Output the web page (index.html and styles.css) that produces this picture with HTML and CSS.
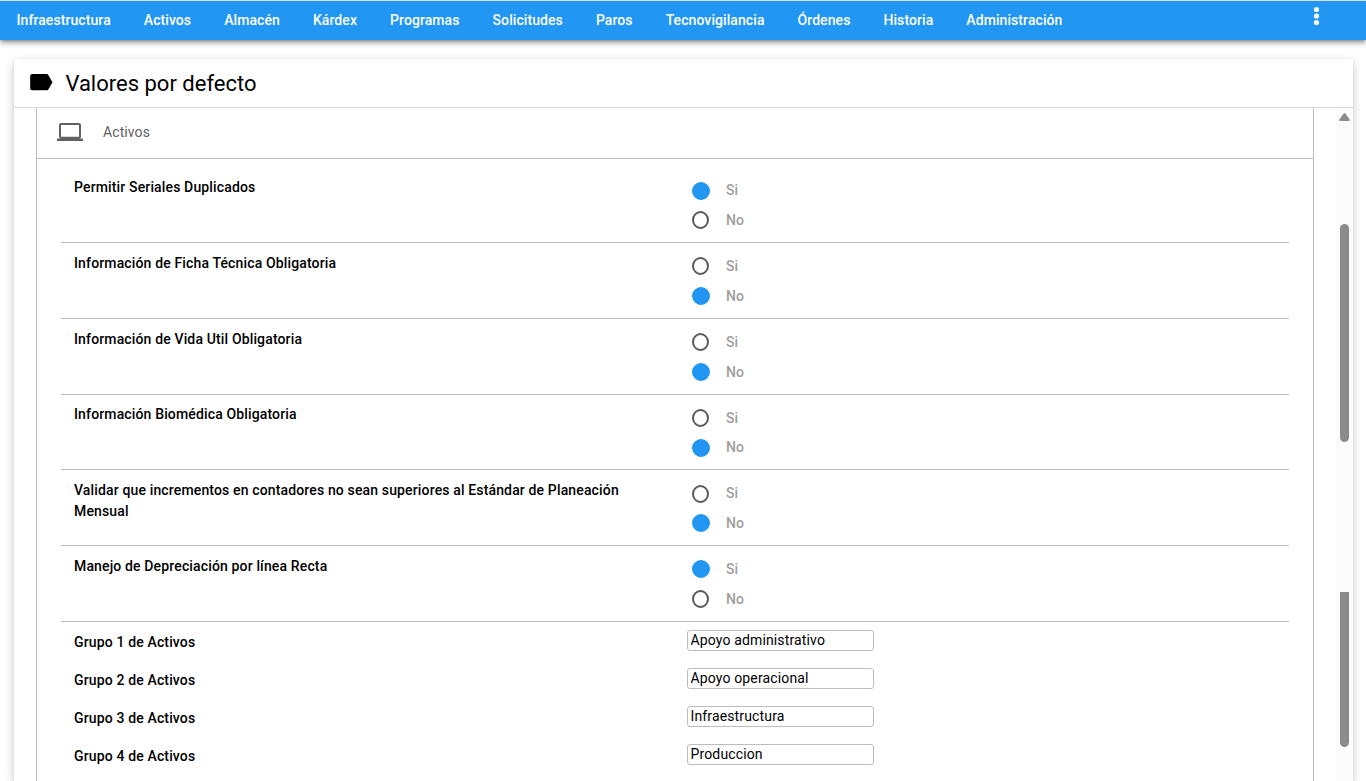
FILE: index.html
```html
<!DOCTYPE html>
<html lang="es">

<head>
    <meta charset="UTF-8">
    <meta name="viewport" content="width=device-width, initial-scale=1.0">
    <title>Valores por defecto</title>
    <link rel="stylesheet" href="styles.css">
</head>

<body>
    <!-- Main menu -->
    <nav class="navbar">
        <ul class="nav-links">
            <li><a href="#">Infraestructura</a></li>
            <li><a href="#">Activos</a></li>
            <li><a href="#">Almacén</a></li>
            <li><a href="#">Kárdex</a></li>
            <li><a href="#">Programas</a></li>
            <li><a href="#">Solicitudes</a></li>
            <li><a href="#">Paros</a></li>
            <li><a href="#">Tecnovigilancia</a></li>
            <li><a href="#">Órdenes</a></li>
            <li><a href="#">Historia</a></li>
            <li><a href="#">Administración</a></li>
        </ul>
        <svg class="more" width="8" height="20" viewBox="0 0 8 20" fill="#fff">
            <circle cx="3.5" cy="3.5" r="2.6" />
            <circle cx="3.5" cy="10" r="2.6" />
            <circle cx="3.5" cy="16.5" r="2.6" />
        </svg>
    </nav>

    <div class="card">
        <div class="card-header">
            <svg class="tag-icon" width="23" height="17" viewBox="0 0 23 17">
                <path d="M2.200 0h14.400c.7 0 1.300.3 1.700.9L22.500 8.200l-4.200 7.200c-.4.6-1 .9-1.700.9H2.200c-1.100 0-2-.9-2-2V2c0-1.100.9-2 2-2z" />
            </svg>
            <h1>Valores por defecto</h1>
        </div>

        <div class="card-body">
            <div class="panel">
                <div class="panel-header">
                    <svg class="laptop-icon" width="26" height="19" viewBox="0 0 26 19" fill="#616161">
                        <path fill-rule="evenodd" d="M4 0h18c1.100 0 2 .9 2 2v11.500c0 1.100-.9 2-2 2h4V18H0v-2.500h4c-1.100 0-2-.9-2-2V2C2 .9 2.900 0 4 0zM4 2v11.700h18V2z" />
                    </svg>
                    <span>Activos</span>
                </div>

                <div class="rows">
                    <div class="row">
                        <div class="label">Permitir Seriales Duplicados</div>
                        <div class="options">
                            <div class="option"><span class="radio checked"></span>Si</div>
                            <div class="option"><span class="radio"></span>No</div>
                        </div>
                    </div>
                    <div class="row">
                        <div class="label">Información de Ficha Técnica Obligatoria</div>
                        <div class="options">
                            <div class="option"><span class="radio"></span>Si</div>
                            <div class="option"><span class="radio checked"></span>No</div>
                        </div>
                    </div>
                    <div class="row">
                        <div class="label">Información de Vida Util Obligatoria</div>
                        <div class="options">
                            <div class="option"><span class="radio"></span>Si</div>
                            <div class="option"><span class="radio checked"></span>No</div>
                        </div>
                    </div>
                    <div class="row">
                        <div class="label">Información Biomédica Obligatoria</div>
                        <div class="options">
                            <div class="option"><span class="radio"></span>Si</div>
                            <div class="option"><span class="radio checked"></span>No</div>
                        </div>
                    </div>
                    <div class="row">
                        <div class="label">Validar que incrementos en contadores no sean superiores al Estándar de Planeación Mensual</div>
                        <div class="options">
                            <div class="option"><span class="radio"></span>Si</div>
                            <div class="option"><span class="radio checked"></span>No</div>
                        </div>
                    </div>
                    <div class="row">
                        <div class="label">Manejo de Depreciación por línea Recta</div>
                        <div class="options">
                            <div class="option"><span class="radio checked"></span>Si</div>
                            <div class="option"><span class="radio"></span>No</div>
                        </div>
                    </div>

                    <!-- Asset groups -->
                    <div class="row group">
                        <div class="label">Grupo 1 de Activos</div>
                        <input type="text" value="Apoyo administrativo">
                    </div>
                    <div class="row group">
                        <div class="label">Grupo 2 de Activos</div>
                        <input type="text" value="Apoyo operacional">
                    </div>
                    <div class="row group">
                        <div class="label">Grupo 3 de Activos</div>
                        <input type="text" value="Infraestructura">
                    </div>
                    <div class="row group">
                        <div class="label">Grupo 4 de Activos</div>
                        <input type="text" value="Produccion">
                    </div>
                </div>
            </div>

            <!-- Scrollbar -->
            <div class="scrollbar">
                <svg width="11" height="8" viewBox="0 0 11 8" fill="#8b8b8b">
                    <path d="M4.600.6q.9-1.100 1.800 0L10.700 6.600q.5 1.400-.8 1.400H1.100Q-.2 8 .3 6.600z" />
                </svg>
                <div class="thumb"></div>
                <div class="thumb thumb-end"></div>
            </div>
        </div>
    </div>
</body>

</html>
```
FILE: styles.css
```css
* {
    box-sizing: border-box;
}

body {
    margin: 0;
    height: 781px;
    overflow: hidden;
    display: flex;
    flex-direction: column;
    font-family: Roboto, sans-serif;
    font-size: 14px;
    color: #000;
    background-color: #fff;
}

/* Navbar */
.navbar {
    display: flex;
    justify-content: space-between;
    flex: 0 0 40px;
    padding: 0 45px 0 0;
    border-top: 1px solid #dcdfe8;
    background-color: #2196f3;
    box-shadow: 0 2px 4px -1px rgba(0, 0, 0, 0.4), 0 4px 5px rgba(0, 0, 0, 0.14), 0 1px 10px rgba(0, 0, 0, 0.12);
}

.nav-links {
    display: flex;
    list-style: none;
    margin: 0;
    padding: 0;
}

.nav-links a {
    display: block;
    padding: 0 16.5px;
    line-height: 38px;
    font-weight: 500;
    letter-spacing: 0.08px;
    color: #fff;
    text-decoration: none;
}

.more {
    margin-top: 5px;
}

/* Card */
.card {
    flex: 1;
    min-height: 0;
    display: flex;
    flex-direction: column;
    margin: 19px 13px 0 14px;
    border-radius: 2px 2px 0 0;
    background-color: #fff;
    box-shadow: 0 3px 10px rgba(0, 0, 0, 0.24);
}

.card-header {
    display: flex;
    flex: 0 0 49px;
    align-items: center;
    gap: 12.4px;
    padding: 2px 16px 0;
    border-bottom: 1px solid #d9d9d9;
}

.card-header h1 {
    margin: 0;
    font-size: 22px;
    font-weight: 400;
    line-height: 28px;
}

.tag-icon {
    margin-top: -4px;
}

.card-body {
    display: flex;
    flex: 1;
    min-height: 0;
    overflow: hidden;
}

/* Panel */
.panel {
    flex: 1;
    margin: 0 22px;
    border: 1px solid #bdbdbd;
    border-width: 0 1px;
}

.panel-header {
    display: flex;
    align-items: center;
    gap: 20px;
    height: 51px;
    padding: 0 20px 2px;
    border-bottom: 1px solid #bdbdbd;
    color: #616161;
    letter-spacing: 0.1px;
}

.laptop-icon {
    margin: 0 0.5px 0 -0.5px;
}

.rows {
    padding: 8.4px 24px 0;
}

.row {
    display: flex;
    align-items: flex-start;
    height: 75.75px;
    padding: 9.7px 13px 0;
    border-bottom: 1px solid #bdbdbd;
}

.label {
    width: 601px;
    padding-right: 40px;
    font-weight: 500;
    line-height: 21px;
    letter-spacing: 0.145px;
}

.options {
    padding: 0 0 0 17px;
    margin-top: -1.65px;
}

.option {
    display: flex;
    align-items: center;
    gap: 16px;
    height: 29.8px;
    color: #9e9e9e;
    font-weight: 500;
}

.radio {
    width: 17px;
    height: 18px;
    margin: 0.4px 1px 0 0;
    border: 2px solid #5a5a5a;
    border-radius: 50%;
}

.radio.checked {
    width: 18px;
    margin-right: 0;
    border-color: #2196f3;
    background-color: #2196f3;
}

.row.group {
    height: 38px;
    border-bottom: 0;
}

.row.group input {
    width: 187px;
    height: 21px;
    margin: -2px 0 0 12px;
    padding: 0 2.5px;
    border: 1px solid #bdbdbd;
    border-radius: 3px;
    font: 14px Roboto, sans-serif;
    letter-spacing: 0.14px;
    outline: none;
}

/* Scrollbar */
.scrollbar {
    display: flex;
    flex-direction: column;
    align-items: center;
    width: 17px;
    padding-top: 5px;
    background-color: #fcfcfc;
}

.thumb {
    width: 9px;
    height: 218px;
    margin-top: 103px;
    border-radius: 5px;
    background-color: #8b8b8b;
}

.thumb-end {
    height: 155px;
    margin-top: 150px;
    border-radius: 0 0 5px 5px;
}
```
